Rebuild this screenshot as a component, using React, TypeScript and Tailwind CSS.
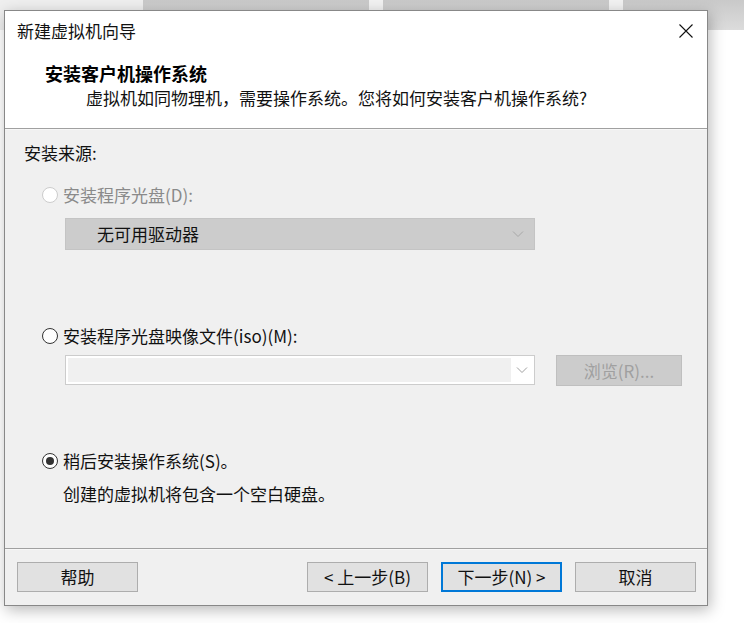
import React from "react";

const FONT = { fontFamily: '"Noto Sans CJK SC", "Microsoft YaHei", sans-serif' };

function Radio({ state }: { state: "disabled" | "off" | "on" }) {
  if (state === "disabled")
    return <span className="block w-[16px] h-[16px] rounded-full border border-[#cccccc] bg-white shrink-0" />;
  if (state === "off")
    return <span className="block w-[16px] h-[16px] rounded-full border-[1.5px] border-[#333333] bg-white shrink-0" />;
  return (
    <span className="flex items-center justify-center w-[16px] h-[16px] rounded-full border-[1.5px] border-[#333333] bg-white shrink-0">
      <span className="block w-[8px] h-[8px] rounded-full bg-[#333333]" />
    </span>
  );
}

function Chevron({ color }: { color: string }) {
  return (
    <svg width="12" height="8" viewBox="0 0 12 8">
      <path d="M1 1.5 L6 6.5 L11 1.5" fill="none" stroke={color} strokeWidth="1" />
    </svg>
  );
}

function Btn({ children, primary }: { children: React.ReactNode; primary?: boolean }) {
  return (
    <div
      className={
        "w-[121px] h-[30px] flex items-center justify-center bg-[#e1e1e1] text-[17px] leading-[24px] text-[#111] " +
        (primary ? "border-2 border-[#0078d7]" : "border border-[#adadad]")
      }
    >
      {children}
    </div>
  );
}

export default function App() {
  return (
    <div className="relative w-[744px] h-[623px] bg-white overflow-hidden" style={FONT}>
      {/* desktop background windows */}
      <div className="absolute left-0 top-0 w-[143px] h-[30px] bg-[#efefef]" />
      <div className="absolute left-[143px] top-0 w-[226px] h-[30px] bg-gradient-to-b from-[#c9c9c9] to-[#d9d9d9]" />
      <div className="absolute left-[369px] top-0 w-[14px] h-[30px] bg-[#f2f2f2]" />
      <div className="absolute left-[383px] top-0 w-[226px] h-[30px] bg-gradient-to-b from-[#c9c9c9] to-[#d9d9d9]" />
      <div className="absolute left-[609px] top-0 w-[14px] h-[30px] bg-[#f2f2f2]" />
      <div className="absolute left-[623px] top-0 w-[121px] h-[30px] bg-gradient-to-b from-[#c9c9c9] to-[#dcdcdc]" />

      {/* dialog window */}
      <div className="absolute left-[4px] top-[10px] w-[704px] h-[596px] border border-[#888888] bg-[#f0f0f0] flex flex-col shadow-[2px_4px_14px_rgba(0,0,0,0.28)]">
        {/* title bar */}
        <div className="h-[39px] bg-white flex items-center justify-between pl-[12px] pr-[14px]">
          <span className="text-[17px] leading-[24px] text-[#111]">新建虚拟机向导</span>
          <svg width="14" height="14" viewBox="0 0 14 14">
            <path d="M0.5 0.5 L13.5 13.5 M13.5 0.5 L0.5 13.5" stroke="#111" strokeWidth="1.1" fill="none" />
          </svg>
        </div>
        {/* header */}
        <div className="h-[78px] bg-white flex flex-col">
          <div className="mt-[11px] pl-[40px] text-[18px] leading-[24px] font-bold text-black">安装客户机操作系统</div>
          <div className="mt-[1px] pl-[81px] text-[17px] leading-[24px] text-[#111]">
            虚拟机如同物理机，需要操作系统。您将如何安装客户机操作系统?
          </div>
        </div>
        <div className="h-[1px] bg-[#a0a0a0]" />
        <div className="h-[1px] bg-[#f7f7f7]" />

        {/* body */}
        <div className="flex-1 flex flex-col">
          <div className="mt-[11px] pl-[19px] text-[17px] leading-[24px] text-[#111]">安装来源:</div>

          <div className="mt-[18px] pl-[37px] h-[24px] flex items-center gap-[5px]">
            <Radio state="disabled" />
            <span className="text-[17px] leading-[24px] text-[#8a8a8a]">安装程序光盘(D):</span>
          </div>

          <div className="mt-[11px] ml-[60px] w-[470px] h-[32px] bg-[#cccccc] border border-[#c4c4c4] flex items-center justify-between pl-[31px] pr-[10px]">
            <span className="text-[17px] leading-[24px] text-[#111]">无可用驱动器</span>
            <Chevron color="#a8a8a8" />
          </div>

          <div className="mt-[74px] pl-[37px] h-[24px] flex items-center gap-[5px]">
            <Radio state="off" />
            <span className="text-[17px] leading-[24px] text-[#111]">安装程序光盘映像文件(iso)(M):</span>
          </div>

          <div className="mt-[7px] ml-[60px] h-[31px] flex items-start">
            <div className="w-[470px] h-[30px] bg-white border border-[#cccccc] flex items-center p-[2px]">
              <div className="w-[443px] h-full bg-[#f0f0f0]" />
              <div className="flex-1 flex justify-center">
                <Chevron color="#a0a0a0" />
              </div>
            </div>
            <div className="ml-[21px] w-[126px] h-[31px] bg-[#cccccc] border border-[#bfbfbf] flex items-center justify-center text-[17px] leading-[24px] text-[#a0a0a0]">
              浏览(R)...
            </div>
          </div>

          <div className="mt-[63px] pl-[37px] h-[24px] flex items-center gap-[5px]">
            <Radio state="on" />
            <span className="text-[17px] leading-[24px] text-[#111]">稍后安装操作系统(S)。</span>
          </div>

          <div className="mt-[9px] pl-[58px] text-[17px] leading-[24px] text-[#111]">创建的虚拟机将包含一个空白硬盘。</div>
        </div>

        {/* footer */}
        <div className="h-[1px] bg-[#a0a0a0]" />
        <div className="h-[1px] bg-[#f7f7f7]" />
        <div className="h-[55px] flex items-start pt-[12px] pl-[12px] pr-[11px]">
          <Btn>帮助</Btn>
          <div className="flex-1" />
          <div className="flex gap-[13px]">
            <Btn>&lt; 上一步(B)</Btn>
            <Btn primary>下一步(N) &gt;</Btn>
            <Btn>取消</Btn>
          </div>
        </div>
      </div>
    </div>
  );
}
